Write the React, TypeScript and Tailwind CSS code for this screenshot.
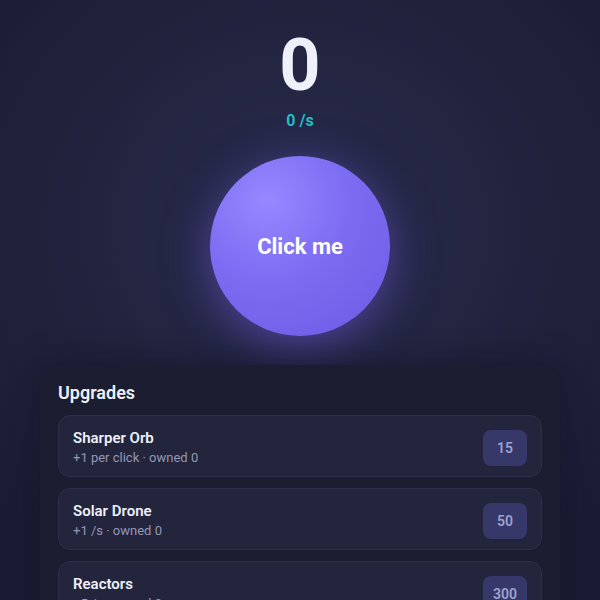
import React, { useState } from "react";

type Upgrade = {
  name: string;
  desc: string;
  cost: number;
};

const upgrades: Upgrade[] = [
  { name: "Sharper Orb", desc: "+1 per click", cost: 15 },
  { name: "Solar Drone", desc: "+1 /s", cost: 50 },
  { name: "Reactors", desc: "+5 /s", cost: 300 },
];

export default function App() {
  const [count, setCount] = useState(0);

  return (
    <div
      className="min-h-screen w-full bg-[radial-gradient(ellipse_70%_60%_at_50%_35%,#282b4e_0%,#22243f_50%,#1b1c33_100%)] text-white"
      style={{ fontFamily: "Roboto, 'Liberation Sans', sans-serif" }}
    >
      <div className="flex flex-col items-center pt-[30px]">
        <div className="text-[72px] font-bold leading-none text-[#eef0fa]">{count}</div>
        <div className="mt-[7px] text-base font-semibold leading-6 text-[#23c4c8]">0 /s</div>

        <button
          onClick={() => setCount(count + 1)}
          className="mt-[23px] flex h-[180px] w-[180px] items-center justify-center rounded-full bg-[radial-gradient(circle_at_32%_25%,#9688ff_0%,#7b6cf2_45%,#6c5ce4_100%)] text-[22px] font-bold text-white shadow-[0_10px_45px_rgba(118,98,240,0.5)]"
        >
          Click me
        </button>

        <div className="mt-[29px] w-[520px] rounded-2xl bg-[#1b1d31] px-[18px] pt-[14px] pb-6 shadow-[0_-4px_30px_rgba(10,10,25,0.35)]">
          <h2 className="mb-2 text-lg font-semibold leading-7 text-[#eef0f8]">Upgrades</h2>
          <div className="flex flex-col gap-[11px]">
            {upgrades.map((u) => (
              <div
                key={u.name}
                className="flex items-center justify-between rounded-xl border border-[#2d2f4c] bg-[#23253d] pt-3 pb-[9px] pl-[14px] pr-[14px]"
              >
                <div>
                  <div className="text-[15px] font-semibold leading-5 text-[#eef0f8]">{u.name}</div>
                  <div className="mt-px text-[13px] leading-[18px] text-[#9497b4]">
                    {u.desc} · owned 0
                  </div>
                </div>
                <div className="flex h-9 min-w-[44px] items-center justify-center rounded-lg bg-[#36386a] px-2.5 text-sm font-semibold text-[#9ea1cf]">
                  {u.cost}
                </div>
              </div>
            ))}
          </div>
        </div>
      </div>
    </div>
  );
}
